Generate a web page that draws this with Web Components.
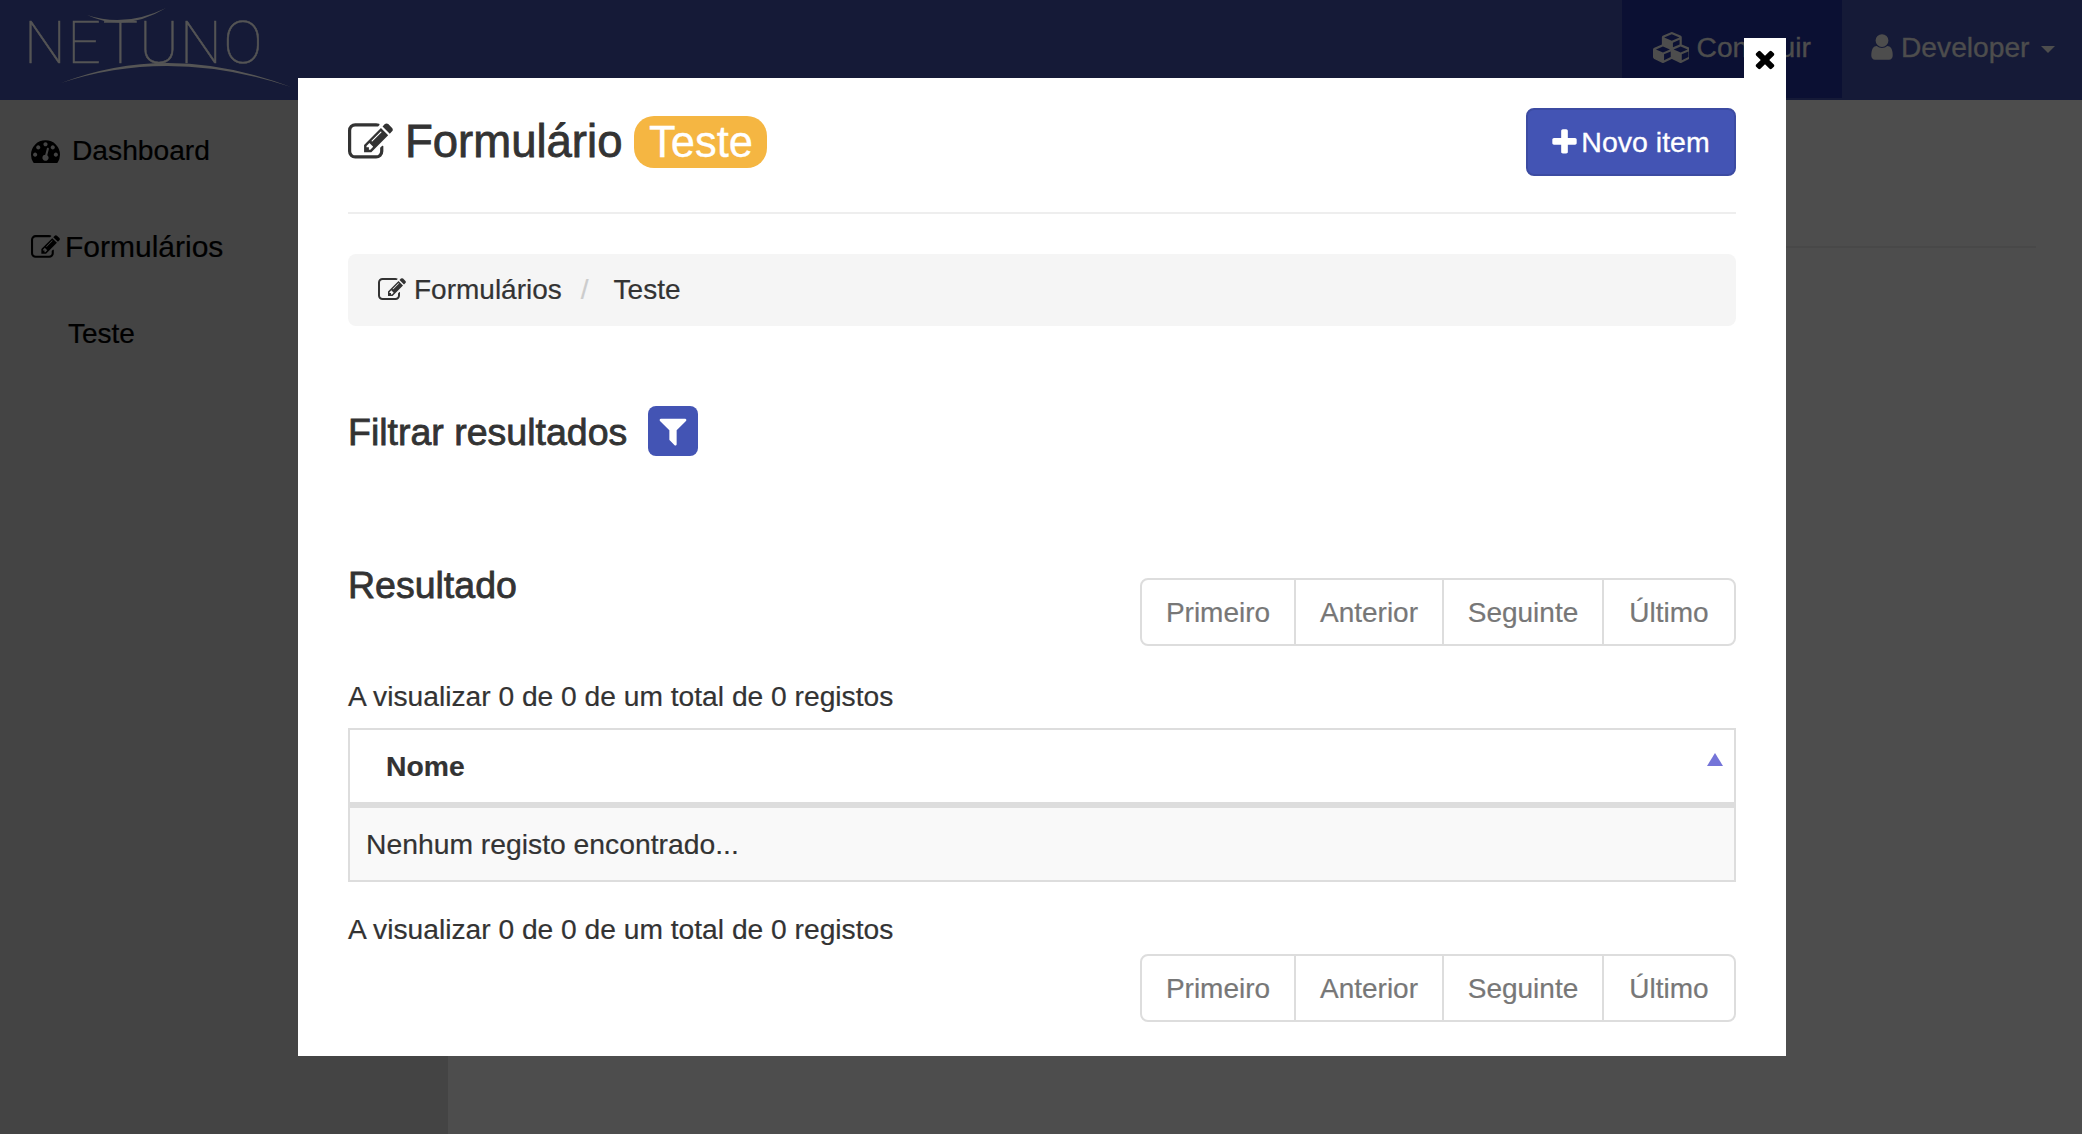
<!DOCTYPE html>
<html lang="pt">
<head>
<meta charset="utf-8">
<title>Netuno</title>
<style>
  html, body { margin: 0; height: 100%; overflow: hidden; }
  body { font-family: "Liberation Sans", Arial, sans-serif; font-size: 28.2px; color: #333; background: #4d4d4d; -webkit-text-stroke: .2px; }
</style>
</head>
<body>
<app-shell>
  <nav-bar slot="top"></nav-bar>
  <side-menu slot="side"></side-menu>
</app-shell>
<modal-box>
  <page-heading></page-heading>
  <bread-crumb></bread-crumb>
  <filter-title></filter-title>
  <result-head></result-head>
  <record-count></record-count>
  <result-table></result-table>
  <record-count class="bottom"></record-count>
  <pager-group class="bottom"></pager-group>
</modal-box>

<script>
// Iconos (Font Awesome 4, viewBox 1792)
const ICONS = {
  edit: 'M888 1184l116-116-152-152-116 116v56h96v96h56zm440-720q-16-16-33 1l-350 350q-17 17-1 33t33-1l350-350q17-17 1-33zm80 594v190q0 119-84.5 203.5t-203.5 84.5h-832q-119 0-203.5-84.5t-84.5-203.5v-832q0-119 84.5-203.5t203.5-84.5h832q63 0 117 25 15 7 18 23 3 17-9 29l-49 49q-14 14-32 8-23-6-45-6h-832q-66 0-113 47t-47 113v832q0 66 47 113t113 47h832q66 0 113-47t47-113v-126q0-13 9-22l64-64q15-15 35-7t20 29zm-96-738l288 288-672 672h-288v-288zm444 132l-92 92-288-288 92-92q28-28 68-28t68 28l152 152q28 28 28 68t-28 68z',
  dashboard: 'M384 1152q0-53-37.5-90.5t-90.5-37.5-90.5 37.5-37.5 90.5 37.5 90.5 90.5 37.5 90.5-37.5 37.5-90.5zm192-448q0-53-37.5-90.5t-90.5-37.5-90.5 37.5-37.5 90.5 37.5 90.5 90.5 37.5 90.5-37.5 37.5-90.5zm428 481l101-382q6-26-7.5-48.5t-38.5-29.5-48 6.5-30 39.5l-101 382q-60 5-107 43.5t-63 98.5q-20 77 20 146t117 89 146-20 89-117q16-60-6-117t-72-91zm660-33q0-53-37.5-90.5t-90.5-37.5-90.5 37.5-37.5 90.5 37.5 90.5 90.5 37.5 90.5-37.5 37.5-90.5zm-640-640q0-53-37.5-90.5t-90.5-37.5-90.5 37.5-37.5 90.5 37.5 90.5 90.5 37.5 90.5-37.5 37.5-90.5zm448 192q0-53-37.5-90.5t-90.5-37.5-90.5 37.5-37.5 90.5 37.5 90.5 90.5 37.5 90.5-37.5 37.5-90.5zm320 448q0 261-141 483-19 29-54 29h-1402q-35 0-54-29-141-221-141-483 0-182 71-348t191-286 286-191 348-71 348 71 286 191 191 286 71 348z',
  cubes: 'M640 1632l384-192v-314l-384 164v342zm-64-454l404-173-404-173-404 173zm1088 454l384-192v-314l-384 164v342zm-64-454l404-173-404-173-404 173zm-448-293l384-165v-266l-384 164v267zm-64-379l441-189-441-189-441 189zm1088 518v416q0 36-19 67t-52 47l-448 224q-25 14-57 14t-57-14l-448-224q-4-2-7-4-2 2-7 4l-448 224q-25 14-57 14t-57-14l-448-224q-33-16-52-47t-19-67v-416q0-38 21.5-70t56.5-48l434-186v-400q0-38 21.5-70t56.5-48l448-192q23-10 50-10t50 10l448 192q35 16 56.5 48t21.5 70v400l434 186q36 16 57 48t21 70z',
  user: 'M1536 1399q0 109-62.5 187t-150.5 78h-854q-88 0-150.5-78t-62.5-187q0-85 8.5-160.5t31.5-152 58.5-131 94-89 134.5-34.5q131 128 313 128t313-128q76 0 134.5 34.5t94 89 58.5 131 31.5 152 8.5 160.5zm-256-887q0 159-112.5 271.5t-271.5 112.5-271.5-112.5-112.5-271.5 112.5-271.5 271.5-112.5 271.5 112.5 112.5 271.5z',
  plus: 'M1600 736v192q0 40-28 68t-68 28h-416v416q0 40-28 68t-68 28h-192q-40 0-68-28t-28-68v-416h-416q-40 0-68-28t-28-68v-192q0-40 28-68t68-28h416v-416q0-40 28-68t68-28h192q40 0 68 28t28 68v416h416q40 0 68 28t28 68z',
  filter: 'M1595 295q17 41-14 70l-493 493v742q0 42-39 59-13 5-25 5-27 0-45-19l-256-256q-19-19-19-45v-486l-493-493q-31-29-14-70 17-39 59-39h1280q42 0 59 39z',
  times: 'M1490 1322q0 40-28 68l-136 136q-28 28-68 28t-68-28l-294-294-294 294q-28 28-68 28t-68-28l-136-136q-28-28-28-68t28-68l294-294-294-294q-28-28-28-68t28-68l136-136q28-28 68-28t68 28l294 294 294-294q28-28 68-28t68 28l136 136q28 28 28 68t-28 68l-294 294 294 294q28 28 28 68z'
};

// Crea el shadow root con los estilos y el contenido
function shadow(el, html) {
  el.attachShadow({ mode: 'open' });
  el.shadowRoot.innerHTML = html;
}

class FaIcon extends HTMLElement {
  connectedCallback() {
    const name = this.getAttribute('name');
    const w = name === 'cubes' ? 2048 : 1792;
    shadow(this, `
      <style>
        :host { display: inline-flex; line-height: 0; flex: none; }
        svg { width: ${w / 1792}em; height: 1em; fill: currentColor; }
      </style>
      <svg viewBox="0 0 ${w} 1792"><path d="${ICONS[name]}"/></svg>`);
  }
}
customElements.define('fa-icon', FaIcon);

class AppShell extends HTMLElement {
  constructor() {
    super();
    shadow(this, `
      <style>
        :host { display: grid; grid-template-columns: 448px 1fr; grid-template-rows: 100px 1fr; height: 1134px; }
        .top { grid-column: 1 / 3; }
        .main { padding: 146px 46px 0 0; }
        .main div { border-top: 2px solid #484848; }
      </style>
      <div class="top"><slot name="top"></slot></div>
      <div><slot name="side"></slot></div>
      <div class="main"><div></div></div>`);
  }
}
customElements.define('app-shell', AppShell);

class NavBar extends HTMLElement {
  constructor() {
    super();
    shadow(this, `
      <style>
        :host { display: flex; height: 100px; background: #151a37; color: #4d4d4d; -webkit-text-stroke: .4px; }
        .logo { position: relative; width: 300px; }
        .logo span { position: absolute; left: 24px; top: 3px; font: 100 59px/80px Roboto, sans-serif; color: #555; letter-spacing: 1.4px; -webkit-text-stroke: .5px; }
        .logo svg { position: absolute; left: 0; top: 0; }
        .space { flex: 1; }
        .item { display: flex; align-items: center; height: 98px; box-sizing: border-box; padding-bottom: 4px; }
        .build { width: 220px; justify-content: center; gap: 8px; background: #0b1033; }
        .build fa-icon { font-size: 31px; }
        .dev { width: 240px; padding-left: 25px; }
        .dev fa-icon { font-size: 30px; margin-right: 4px; }
        .caret { width: 0; height: 0; border: 7.5px solid transparent; border-top-color: currentColor; border-bottom: 0; margin-left: 12px; margin-top: 4px; }
      </style>
      <div class="logo">
        <span>NETUNO</span>
        <svg width="300" height="100" viewBox="0 0 300 100" fill="#555">
          <path d="M87 15 Q125 33 166 8 Q125 28 87 15 Z"/>
          <path d="M61 83 Q170 41 291 87 Q170 47 61 83 Z"/>
        </svg>
      </div>
      <div class="space"></div>
      <div class="item build"><fa-icon name="cubes"></fa-icon><span>Construir</span></div>
      <div class="item dev"><fa-icon name="user"></fa-icon><span>Developer</span><i class="caret"></i></div>`);
  }
}
customElements.define('nav-bar', NavBar);

class SideMenu extends HTMLElement {
  constructor() {
    super();
    shadow(this, `
      <style>
        :host { display: block; height: 100%; background: #444; color: #000; padding-top: 30px; box-sizing: border-box; }
        .row { display: flex; align-items: center; height: 40px; padding-left: 31px; }
        .dash { gap: 12px; font-size: 28.2px; }
        .dash fa-icon { font-size: 29px; }
        .form { gap: 5px; margin-top: 57px; font-size: 30px; }
        .form fa-icon { font-size: 29px; }
        .sub { margin-top: 47px; padding-left: 68px; font-size: 28px; }
      </style>
      <div class="row dash"><fa-icon name="dashboard"></fa-icon><span>Dashboard</span></div>
      <div class="row form"><fa-icon name="edit"></fa-icon><span>Formulários</span></div>
      <div class="row sub">Teste</div>`);
  }
}
customElements.define('side-menu', SideMenu);

class ModalBox extends HTMLElement {
  constructor() {
    super();
    shadow(this, `
      <style>
        :host { position: fixed; left: 298px; top: 78px; width: 1488px; height: 978px; box-sizing: border-box; padding: 0 50px; background: #fff; display: block; }
        .close { position: absolute; right: 0; top: -40px; width: 42px; height: 40px; background: #fff; color: #000; display: flex; align-items: center; justify-content: center; font-size: 28px; padding-top: 2px; box-sizing: border-box; }
      </style>
      <div class="close"><fa-icon name="times"></fa-icon></div>
      <slot></slot>`);
  }
}
customElements.define('modal-box', ModalBox);

class PageHeading extends HTMLElement {
  constructor() {
    super();
    shadow(this, `
      <style>
        :host { display: flex; align-items: center; height: 128px; padding-bottom: 6px; border-bottom: 2px solid #eee; }
        h1 { margin: 0; display: flex; align-items: center; font-size: 45.5px; font-weight: 400; flex: 1; -webkit-text-stroke: .8px; }
        h1 fa-icon { font-size: 45px; margin-right: 12px; }
        .label { margin-left: 12px; background: #f5b642; color: #fff; font-size: 43.5px; line-height: 52px; padding: 0 14.5px; border-radius: 20px; -webkit-text-stroke: .3px; }
        button { width: 210px; height: 68px; background: #4354b4; color: #fff; border: 2px solid #3c4ba2; border-radius: 8px; font: 28.5px "Liberation Sans", Arial, sans-serif; display: flex; align-items: center; justify-content: center; gap: 1px; padding: 0 3px 0 0; -webkit-text-stroke: .3px; }
        button fa-icon { font-size: 31px; }
      </style>
      <h1><fa-icon name="edit"></fa-icon>Formulário<span class="label">Teste</span></h1>
      <button><fa-icon name="plus"></fa-icon>Novo item</button>`);
  }
}
customElements.define('page-heading', PageHeading);

class BreadCrumb extends HTMLElement {
  constructor() {
    super();
    shadow(this, `
      <style>
        :host { display: flex; align-items: center; height: 72px; margin-top: 40px; padding-left: 30px; background: #f5f5f5; border-radius: 8px; font-size: 28px; }
        fa-icon { margin-right: 8px; }
        .sep { color: #ccc; margin: 0 25px 0 19px; }
      </style>
      <fa-icon name="edit"></fa-icon><span>Formulários</span><span class="sep">/</span><span>Teste</span>`);
  }
}
customElements.define('bread-crumb', BreadCrumb);

class FilterTitle extends HTMLElement {
  constructor() {
    super();
    shadow(this, `
      <style>
        :host { display: flex; align-items: center; gap: 21px; margin-top: 80px; height: 50px; }
        h3 { margin: 0; padding-top: 2px; font-size: 37.5px; font-weight: 400; -webkit-text-stroke: .8px; }
        .btn { width: 50px; height: 50px; border-radius: 8px; background: #4354b4; color: #fff; display: flex; align-items: center; justify-content: center; font-size: 34px; }
      </style>
      <h3>Filtrar resultados</h3><div class="btn"><fa-icon name="filter"></fa-icon></div>`);
  }
}
customElements.define('filter-title', FilterTitle);

class PagerGroup extends HTMLElement {
  constructor() {
    super();
    shadow(this, `
      <style>
        :host { display: flex; justify-content: flex-end; }
        :host(.bottom) { margin-top: 5px; }
        .group { display: flex; height: 68px; box-sizing: border-box; border: 2px solid #ddd; border-radius: 8px; color: #777; font-size: 28px; }
        .group span { display: flex; align-items: center; justify-content: center; box-sizing: border-box; border-left: 2px solid #ddd; padding-top: 1px; }
        .group span:nth-child(1) { width: 152px; border-left: 0; }
        .group span:nth-child(2) { width: 148px; }
        .group span:nth-child(3) { width: 160px; }
        .group span:nth-child(4) { width: 132px; }
      </style>
      <div class="group"><span>Primeiro</span><span>Anterior</span><span>Seguinte</span><span>Último</span></div>`);
  }
}
customElements.define('pager-group', PagerGroup);

class ResultHead extends HTMLElement {
  constructor() {
    super();
    shadow(this, `
      <style>
        :host { display: flex; justify-content: space-between; align-items: flex-start; margin-top: 122px; }
        h3 { margin: -15px 0 0; font-size: 37.5px; font-weight: 400; line-height: 44px; -webkit-text-stroke: .8px; }
      </style>
      <h3>Resultado</h3><pager-group></pager-group>`);
  }
}
customElements.define('result-head', ResultHead);

class RecordCount extends HTMLElement {
  constructor() {
    super();
    shadow(this, `
      <style>
        :host { display: block; margin-top: 30px; line-height: 40px; }
        :host(.bottom) { margin-top: 27px; }
      </style>
      A visualizar 0 de 0 de um total de 0 registos`);
  }
}
customElements.define('record-count', RecordCount);

class ResultTable extends HTMLElement {
  constructor() {
    super();
    shadow(this, `
      <style>
        :host { display: block; margin-top: 12px; }
        table { width: 100%; border-collapse: separate; border-spacing: 0; font-size: 28.3px; }
        th, td { border: 2px solid #ddd; text-align: left; }
        th { position: relative; height: 72px; padding: 0 36px; border-bottom-width: 6px; font-weight: 700; }
        th::after { content: ""; position: absolute; right: 11px; top: 23px; width: 0; height: 0; border: 8px solid transparent; border-top: 0; border-bottom: 13px solid #7474d8; }
        td { height: 72px; padding: 0 16px; background: #f9f9f9; border-top: 0; }
      </style>
      <table><thead><tr><th>Nome</th></tr></thead><tbody><tr><td>Nenhum registo encontrado...</td></tr></tbody></table>`);
  }
}
customElements.define('result-table', ResultTable);
</script>
</body>
</html>
